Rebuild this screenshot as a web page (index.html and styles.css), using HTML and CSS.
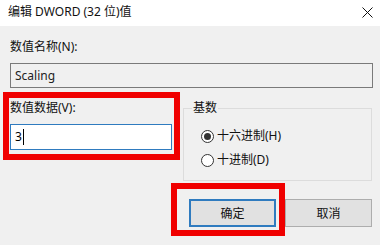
FILE: index.html
```html
<!DOCTYPE html>
<html lang="zh-CN">
<head>
<meta charset="utf-8">
<title>编辑 DWORD (32 位)值</title>
<link rel="stylesheet" href="styles.css">
</head>
<body>
<div class="dialog">
  <div class="titlebar">
    <span class="title">编辑 DWORD (32 位)值</span>
    <svg class="close" width="11" height="11" viewBox="0 0 11 11"><path d="M0.5 0.5 L10.5 10.5 M10.5 0.5 L0.5 10.5" stroke="#111" stroke-width="1" fill="none"/></svg>
  </div>
  <div class="content">
    <div class="label">数值名称(N):</div>
    <div class="textbox readonly">Scaling</div>
    <div class="row">
      <div class="col">
        <div class="label">数值数据(V):</div>
        <div class="textbox focus">3<span class="caret"></span></div>
      </div>
      <div class="group">
        <div class="legend">基数</div>
        <div class="radio first"><span class="dot checked"></span>十六进制(H)</div>
        <div class="radio"><span class="dot"></span>十进制(D)</div>
      </div>
    </div>
    <div class="buttons">
      <div class="btn default">确定</div>
      <div class="btn">取消</div>
    </div>
  </div>
  <div class="mark mark-data"></div>
  <div class="mark mark-ok"></div>
</div>
</body>
</html>
```

FILE: styles.css
```css
html, body {
  margin: 0;
  padding: 0;
}
body {
  width: 380px;
  height: 245px;
  overflow: hidden;
  background: #f0f0f0;
  font-family: "Noto Sans", "Noto Sans CJK SC", sans-serif;
  font-size: 12px;
  color: #000;
}
.dialog {
  position: relative;
  width: 380px;
  height: 245px;
}
.titlebar {
  height: 26px;
  background: #fff;
  display: flex;
  align-items: center;
  justify-content: space-between;
  padding: 0 7px 2px 8px;
  box-sizing: border-box;
}
.title {
  line-height: 16px;
  color: #111;
}
.close {
  display: block;
  margin-top: 1px;
}
.content {
  padding: 13px 7px 0 10px;
}
.label {
  line-height: 16px;
  height: 16px;
  color: #111;
}
.textbox {
  box-sizing: border-box;
  margin-top: 8px;
  display: flex;
  align-items: center;
  padding-left: 4px;
  line-height: 16px;
}
.textbox.readonly {
  width: 363px;
  height: 25px;
  border: 1px solid #7a7a7a;
  background: #f0f0f0;
  color: #222;
}
.textbox.focus {
  width: 162px;
  height: 26px;
  border: 1px solid #2f7bbf;
  background: #fff;
}
.caret {
  display: inline-block;
  width: 1px;
  height: 16px;
  background: #000;
  margin-left: 1px;
}
.row {
  margin-top: 12px;
  display: grid;
  grid-template-columns: 162px 189px;
  column-gap: 11px;
}
.group {
  margin-top: 8px;
  height: 73px;
  box-sizing: border-box;
  border: 1px solid #dcdcdc;
}
.legend {
  display: table;
  margin: -9px 0 0 8px;
  padding: 0 1px;
  line-height: 16px;
  background: #f0f0f0;
  color: #111;
}
.radio {
  display: flex;
  align-items: center;
  gap: 3px;
  padding-left: 17px;
  line-height: 16px;
  height: 16px;
  margin-top: 8px;
  color: #111;
}
.radio.first {
  margin-top: 12px;
}
.dot {
  width: 13px;
  height: 13px;
  box-sizing: border-box;
  border: 1px solid #333;
  border-radius: 50%;
  background: #fff;
  display: flex;
  align-items: center;
  justify-content: center;
}
.dot.checked::after {
  content: "";
  width: 7px;
  height: 7px;
  border-radius: 50%;
  background: #333;
}
.buttons {
  width: 362px;
  margin-top: 18px;
  display: flex;
  justify-content: flex-end;
  gap: 9px;
}
.btn {
  width: 87px;
  height: 28px;
  box-sizing: border-box;
  border: 1px solid #adadad;
  background: #e1e1e1;
  display: flex;
  align-items: center;
  justify-content: center;
  color: #111;
}
.btn.default {
  border: 2px solid #2f7bbf;
}
.mark {
  position: absolute;
  box-sizing: border-box;
  border: 6px solid #f00000;
}
.mark-data {
  left: 3px;
  top: 92px;
  width: 177px;
  height: 68px;
}
.mark-ok {
  left: 171px;
  top: 183px;
  width: 114px;
  height: 53px;
}
```
